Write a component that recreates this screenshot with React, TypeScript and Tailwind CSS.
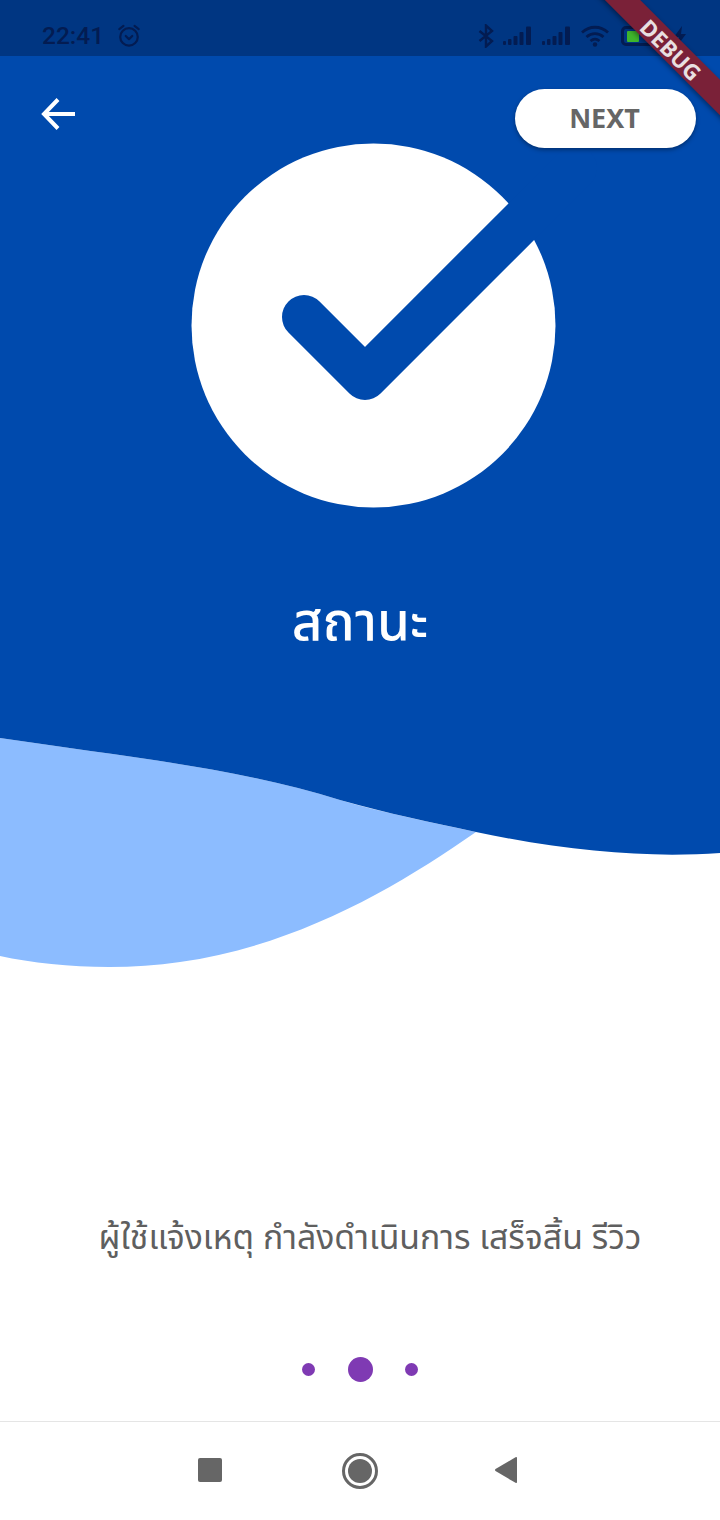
import React from "react";

const Signal = () => (
  <svg width="28" height="20" viewBox="0 0 28 20" fill="#031c52">
    <rect x="0" y="15" width="3" height="4" rx="1" />
    <rect x="5" y="13" width="3.5" height="6" rx="1" />
    <rect x="10.5" y="10" width="4" height="9" rx="1" />
    <rect x="16.5" y="6" width="4" height="13" rx="1" />
    <rect x="23" y="0.5" width="5" height="18.5" rx="1" />
  </svg>
);

export default function App() {
  return (
    <div className="relative w-[720px] h-[1520px] overflow-hidden bg-white flex flex-col font-['Noto_Sans','Liberation_Sans',sans-serif]">
      <svg className="absolute left-0 top-0" width="720" height="980" viewBox="0 0 720 980">
        <path d="M0 738 C120 756 240 768 340 800 C380 812 430 822 476 832 C400 885 300 945 180 962 C120 971 50 967 0 956 Z" fill="#8cbcff" />
        <path d="M0 0 H720 V853 C650 858 570 852 476 832 C430 822 390 814 340 800 C240 768 120 756 0 738 Z" fill="#004aad" />
        <circle cx="373.5" cy="325.5" r="182" fill="#ffffff" />
        <path d="M304 317 L365 378 L575 168" fill="none" stroke="#004aad" strokeWidth="44" strokeLinecap="round" strokeLinejoin="round" />
      </svg>

      <div className="relative h-[56px] shrink-0 bg-[#003682] flex items-center justify-between pl-[42px] pr-[33px] pt-[16px]">
        <div className="flex items-center gap-[13px]">
          <span className="text-[24.5px] leading-none font-medium text-[#031c52] font-['Roboto',sans-serif]">22:41</span>
          <svg width="24" height="25" viewBox="0 0 26 26" fill="none" stroke="#031c52" strokeWidth="2.4" strokeLinecap="round" strokeLinejoin="round" className="mt-[-2px]">
            <circle cx="13" cy="14.5" r="9.5" />
            <path d="M9.5 13.5 L13 17 L16.5 13.5" />
            <path d="M2.5 6 L7 2.5 M23.5 6 L19 2.5" />
          </svg>
        </div>
        <div className="flex items-center">
          <svg width="16" height="24" viewBox="0 0 16 24" fill="none" stroke="#031c52" strokeWidth="2.4" className="mr-[9px]">
            <path d="M1.5 7 L14 17 L8 22.5 V1.5 L14 7 L1.5 17" />
          </svg>
          <Signal />
          <span className="w-[11px]" />
          <Signal />
          <span className="w-[11px]" />
          <svg width="28" height="22" viewBox="0 0 28 22" fill="none" stroke="#031c52" strokeWidth="2.8" className="mr-[12px]">
            <path d="M1 7.5 C8.5 0.5 19.5 0.5 27 7.5" />
            <path d="M5.5 12 C10.5 7.5 17.5 7.5 22.5 12" />
            <path d="M9.5 16 C12.5 13.5 15.5 13.5 18.5 16" />
            <circle cx="14" cy="19.5" r="2.2" fill="#031c52" stroke="none" />
          </svg>
          <div className="w-[42px] h-[20px] rounded-[5px] border-[3px] border-[#031c52] flex items-center pl-[3px]">
            <div className="w-[12px] h-[11px] rounded-[1px] bg-[#3fb62c]" />
          </div>
          <svg width="14" height="22" viewBox="0 0 14 22" fill="#031c52" className="ml-[10px]">
            <path d="M9 1 L1 12 H6 L4 21 L13 9 H8 Z" />
          </svg>
        </div>
      </div>

      <div className="relative h-[32px]" />
      <div className="relative flex items-center justify-between pl-[40px] pr-[24px] h-[60px] shrink-0">
        <svg width="36" height="34" viewBox="0 0 36 34" fill="none" stroke="#ffffff" strokeWidth="4" className="mt-[-8px]">
          <path d="M35 17 H4 M18 2.5 L4 17 L18 31.5" />
        </svg>
        <div className="w-[181px] h-[59px] rounded-full bg-white shadow-[0_2px_4px_rgba(0,0,0,0.35)] flex items-center justify-center text-[27px] font-bold text-[#666666] pr-[2px]">NEXT</div>
      </div>

      <div className="relative mt-[441px] text-center text-[53px] leading-[70px] font-medium text-white font-['Noto_Sans_Thai','Noto_Sans',sans-serif]">สถานะ</div>

      <div className="relative mt-[558px] pl-[20px] text-center text-[33.8px] leading-[44px] text-[#5f5f5f] font-['Noto_Sans_Thai','Noto_Sans',sans-serif]">ผู้ใช้แจ้งเหตุ กำลังดำเนินการ เสร็จสิ้น รีวิว</div>

      <div className="relative mt-[95px] h-[26px] flex items-center justify-center pr-[1px]">
        <span className="w-[13px] h-[13px] rounded-full bg-[#7f3ab3] mr-[33px]" />
        <span className="w-[25px] h-[25px] rounded-full bg-[#7f3ab3] mr-[32px]" />
        <span className="w-[13px] h-[13px] rounded-full bg-[#7f3ab3]" />
      </div>

      <div className="relative mt-[39px] flex-1 border-t border-[#e5e5e5] flex items-center justify-center pr-[4px]">
        <span className="w-[24px] h-[24px] rounded-[2px] bg-[#666666] mr-[120px] mt-[-2px]" />
        <span className="w-[36px] h-[36px] rounded-full border-[3px] border-[#666666] p-[3px] mr-[116px]">
          <span className="block w-full h-full rounded-full bg-[#666666]" />
        </span>
        <svg width="24" height="28" viewBox="0 0 24 28" fill="#666666" className="mt-[-2px]">
          <path d="M23 2 V26 Q23 27.5 21.5 26.8 L1.5 15 Q0.5 14 1.5 13 L21.5 1.2 Q23 0.5 23 2 Z" />
        </svg>
      </div>

      <div className="absolute right-[-63px] top-[38px] w-[220px] h-[25px] rotate-45 bg-[#7a2138] shadow-[0_2px_5px_rgba(0,0,0,0.4)] flex items-center justify-center pr-[4px]">
        <span className="text-[22px] leading-none font-bold text-[#e8e0e2]">DEBUG</span>
      </div>
    </div>
  );
}
